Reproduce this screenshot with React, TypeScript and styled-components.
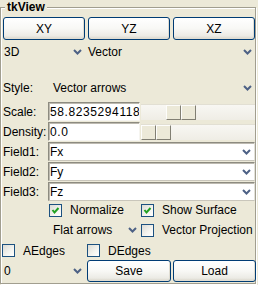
import styled, { createGlobalStyle } from 'styled-components';

const GlobalStyle = createGlobalStyle`
  html, body {
    margin: 0;
    padding: 0;
    background: #ece9d8;
  }
  body {
    font-family: "Liberation Sans", Arial, sans-serif;
    font-size: 12px;
    color: #000;
  }
`;

const SCALE_VALUE = 58.8235294118;
const SCALE_MAX = 200;

const Chevron = () => (
  <svg width="9" height="6" viewBox="0 0 9 6">
    <polyline points="1,1 4.5,4.5 8,1" fill="none" stroke="#4d6185" strokeWidth="2" />
  </svg>
);

const Check = ({ checked, label }: { checked?: boolean; label: string }) => (
  <CheckItem>
    <CheckBox>
      {checked && (
        <svg width="11" height="11" viewBox="0 0 11 11">
          <polyline points="2.5,5 4.5,7.5 8.5,3" fill="none" stroke="#21a121" strokeWidth="2" />
        </svg>
      )}
    </CheckBox>
    <span>{label}</span>
  </CheckItem>
);

const Slider = ({ value, max }: { value: number; max: number }) => {
  const travel = 84;
  return (
    <Trough>
      <Handle style={{ marginLeft: Math.round((value / max) * travel) }}>
        <HandleHalf />
        <HandleHalf />
      </Handle>
    </Trough>
  );
};

export default function App() {
  return (
    <>
      <GlobalStyle />
      <Window>
        <Frame>
          <Title>tkView</Title>

          <ButtonRow>
            <PushButton>XY</PushButton>
            <PushButton>YZ</PushButton>
            <PushButton>XZ</PushButton>
          </ButtonRow>

          <MenuRow>
            <MenuButton>
              <span>3D</span>
              <Chevron />
            </MenuButton>
            <MenuButton>
              <span>Vector</span>
              <Chevron />
            </MenuButton>
          </MenuRow>

          <FormRow $top={15} $height={20}>
            <Label>Style:</Label>
            <MenuButton $indent={5} $span>
              <span>Vector arrows</span>
              <Chevron />
            </MenuButton>
          </FormRow>

          <FormRow $top={4}>
            <Label>Scale:</Label>
            <Entry value={String(SCALE_VALUE)} readOnly />
            <Slider value={SCALE_VALUE} max={SCALE_MAX} />
          </FormRow>

          <FormRow>
            <Label>Density:</Label>
            <Entry value="0.0" readOnly />
            <Slider value={0} max={SCALE_MAX} />
          </FormRow>

          {['Fx', 'Fy', 'Fz'].map((f, i) => (
            <FormRow key={f}>
              <Label>Field{i + 1}:</Label>
              <Combo>
                <span>{f}</span>
                <Chevron />
              </Combo>
            </FormRow>
          ))}

          <FormRow $top={0} $height={18}>
            <span />
            <Check checked label="Normalize" />
            <Check checked label="Show Surface" />
          </FormRow>

          <FormRow $height={20}>
            <span />
            <MenuButton $indent={5}>
              <span>Flat arrows</span>
              <Chevron />
            </MenuButton>
            <Check label="Vector Projection" />
          </FormRow>

          <EdgeRow>
            <Check label="AEdges" />
            <Check label="DEdges" />
          </EdgeRow>

          <BottomRow>
            <MenuButton>
              <span>0</span>
              <Chevron />
            </MenuButton>
            <PushButton>Save</PushButton>
            <PushButton>Load</PushButton>
          </BottomRow>
        </Frame>
      </Window>
    </>
  );
}

// ============================
//  Styled Components
// ============================

const Window = styled.div`
  width: 258px;
  height: 285px;
  padding-top: 7px;
  box-sizing: border-box;
  overflow: hidden;
  background: #ece9d8;
`;

const Frame = styled.div`
  position: relative;
  width: 256px;
  height: 277px;
  box-sizing: border-box;
  padding: 9px 0 0 2px;
  border: 1px solid #a19e8f;
  box-shadow: inset 1px 1px 0 #fff, 1px 1px 0 #fff;
`;

const Title = styled.div`
  position: absolute;
  top: -8px;
  left: 4px;
  padding: 0 2px;
  line-height: 14px;
  font-weight: bold;
  background: #ece9d8;
`;

const ButtonRow = styled.div`
  display: grid;
  grid-template-columns: repeat(3, 82px);
  column-gap: 3px;
  height: 23px;
`;

const PushButton = styled.button`
  height: 100%;
  padding: 0;
  font-family: inherit;
  font-size: 12px;
  color: #000;
  border: 1px solid #003c74;
  border-radius: 3px;
  background: linear-gradient(#ffffff 0%, #f8f8f5 50%, #ecebe5 85%, #d8d4c8 100%);
  box-shadow: inset -1px -1px 0 #e0ddd2;
`;

const MenuRow = styled.div`
  display: grid;
  grid-template-columns: 82px 1fr;
  column-gap: 2px;
  height: 22px;
  margin-top: 1px;
`;

const MenuButton = styled.div<{ $indent?: number; $span?: boolean }>`
  display: flex;
  align-items: center;
  justify-content: space-between;
  padding: 0 3px 0 ${({ $indent }) => $indent ?? 1}px;
  grid-column: ${({ $span }) => ($span ? 'span 2' : 'auto')};
  white-space: nowrap;
`;

const FormRow = styled.div<{ $top?: number; $height?: number }>`
  display: grid;
  grid-template-columns: 45px 92px 1fr;
  align-items: center;
  height: ${({ $height }) => $height ?? 19}px;
  margin-top: ${({ $top }) => $top ?? 1}px;
`;

const Label = styled.span`
  white-space: nowrap;
`;

const Entry = styled.input`
  width: 92px;
  height: 19px;
  box-sizing: border-box;
  padding: 0 0 0 1px;
  font-family: inherit;
  font-size: 12px;
  letter-spacing: 0.6px;
  color: #000;
  background: #fff;
  border: 1px solid;
  border-color: #8d8b80 #f6f5f0 #f6f5f0 #8d8b80;
  box-shadow: inset 1px 1px 0 #bdbab0;
  outline: none;
`;

const Trough = styled.div`
  display: flex;
  height: 15px;
  margin-left: 1px;
  background: linear-gradient(#f8f7f3, #efede5);
  border-top: 1px solid #e2dfd3;
`;

const Handle = styled.div`
  display: flex;
`;

const HandleHalf = styled.div`
  width: 15px;
  height: 15px;
  box-sizing: border-box;
  background: #ece9d8;
  border: 1px solid;
  border-color: #fdfdfb #817f73 #817f73 #fdfdfb;
`;

const Combo = styled.div`
  grid-column: span 2;
  display: flex;
  align-items: center;
  justify-content: space-between;
  height: 19px;
  box-sizing: border-box;
  padding: 0 3px 0 1px;
  background: #fff;
  border: 1px solid;
  border-color: #8d8b80 #e4e2da #c9c6bb #8d8b80;
  box-shadow: inset 1px 1px 0 #bdbab0;
`;

const CheckItem = styled.label`
  display: flex;
  align-items: center;
  gap: 8px;
  padding-left: 1px;
  white-space: nowrap;
`;

const CheckBox = styled.span`
  display: flex;
  align-items: center;
  justify-content: center;
  width: 13px;
  height: 13px;
  box-sizing: border-box;
  border: 1px solid #1c5180;
  background: linear-gradient(135deg, #dcdbd4 0%, #f4f4f0 60%, #ffffff 100%);
`;

const EdgeRow = styled.div`
  display: grid;
  grid-template-columns: 85px 1fr;
  align-items: center;
  height: 19px;
  margin: 1px 0 0 -2px;
`;

const BottomRow = styled.div`
  display: grid;
  grid-template-columns: 82px 84px 83px;
  column-gap: 2px;
  height: 22px;
`;
